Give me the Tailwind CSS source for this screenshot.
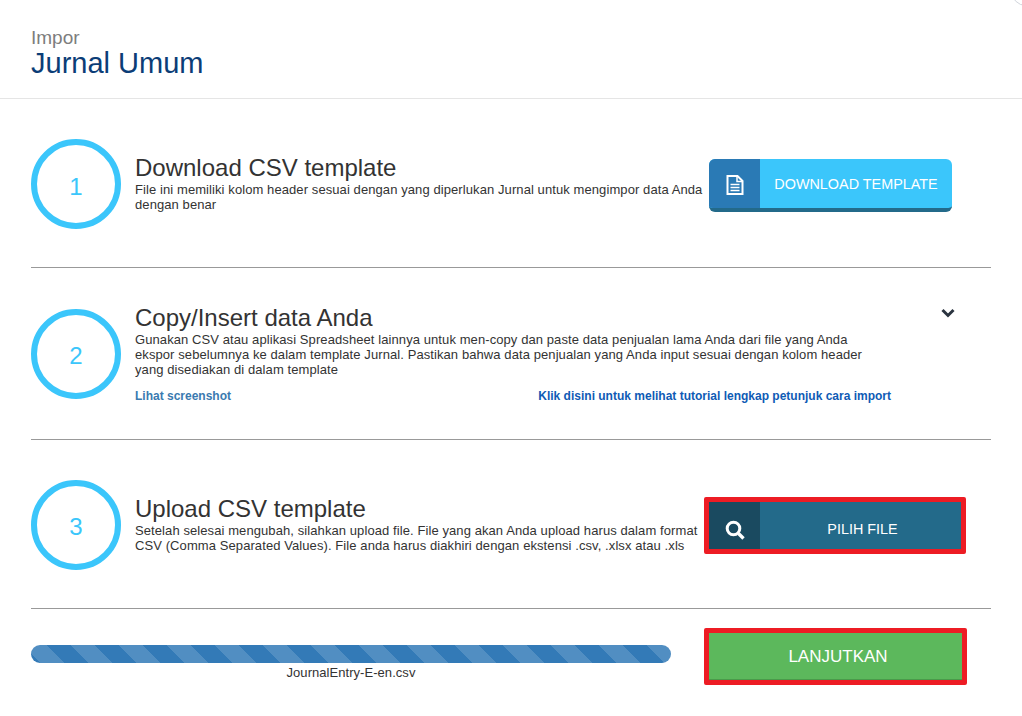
<!DOCTYPE html>
<html lang="en">
  <head>
    <meta charset="UTF-8" />
    <meta name="viewport" content="width=device-width, initial-scale=1.0" />
    <title>Impor - Jurnal Umum</title>
    <script src="https://cdn.jsdelivr.net/npm/@tailwindcss/browser@4"></script>
  </head>
  <body class="relative h-[716px] overflow-hidden bg-white font-['Liberation_Sans',Arial,sans-serif] text-[#333]">
    <!-- close button corner -->
    <div class="absolute left-[1011px] top-[-24px] h-[30px] w-[30px] rounded-full border border-gray-300"></div>

    <!-- Header -->
    <header class="h-[99px] border-b border-[#e5e5e5] px-[31px] pt-[28px]">
      <p class="text-[19px] leading-[20px] text-[#7d7d7d]">Impor</p>
      <h1 class="mt-[-1px] text-[29px] leading-[32px] text-[#0b3d77]">Jurnal Umum</h1>
    </header>

    <main class="px-[31px]">
      <!-- Step 1 -->
      <section class="flex h-[169px] border-b border-[#999] pt-[40px]">
        <div class="flex h-[90px] w-[90px] shrink-0 items-center justify-center rounded-full border-[6px] border-[#3bc6fb] pt-[5px] text-[24px] text-[#3bc6fb]">1</div>
        <div class="ml-[14px] w-[574px] pt-[16px]">
          <h2 class="text-[24px] leading-[26px]">Download CSV template</h2>
          <p class="mt-[1px] text-[13px] leading-[15px] tracking-[0.087px]">File ini memiliki kolom header sesuai dengan yang diperlukan Jurnal untuk mengimpor data Anda dengan benar</p>
        </div>
        <div class="mt-[20px] flex h-[53px] w-[243px] overflow-hidden rounded-[6px] border-b-[4px] border-[#236a8a] bg-[#3bc6fb] text-white">
          <span class="flex w-[51px] items-center justify-center bg-[#2a7ab5] pt-[3px]">
            <svg class="h-[20px] w-[18px]" viewBox="0 0 18 20" fill="none" stroke="white">
              <path d="M1.5 1h10l5 5v13h-15z" stroke-width="2" />
              <path d="M11 1v5.5h5.5" stroke-width="1.5" />
              <path d="M4.5 9.5h9M4.500 12.500h9M4.500 15.500h9" stroke-width="1.600" />
            </svg>
          </span>
          <span class="flex flex-1 items-center justify-center pt-[2px] text-[14.4px]">DOWNLOAD TEMPLATE</span>
        </div>
      </section>

      <!-- Step 2 -->
      <section class="relative flex h-[172px] border-b border-[#999] pt-[41px]">
        <div class="flex h-[90px] w-[90px] shrink-0 items-center justify-center rounded-full border-[6px] border-[#3bc6fb] pt-[4px] text-[24px] text-[#3bc6fb]">2</div>
        <div class="ml-[14px] w-[756px]">
          <h2 class="mt-[-4px] text-[24px] leading-[26px]">Copy/Insert data Anda</h2>
          <p class="mt-[1px] pr-[21px] text-[13px] leading-[15px] tracking-[0.087px]">Gunakan CSV atau aplikasi Spreadsheet lainnya untuk men-copy dan paste data penjualan lama Anda dari file yang Anda ekspor sebelumnya ke dalam template Jurnal. Pastikan bahwa data penjualan yang Anda input sesuai dengan kolom header yang disediakan di dalam template</p>
          <div class="mt-[12px] flex justify-between text-[12px] leading-[14px] font-bold">
            <span class="text-[#3a7ab0]">Lihat screenshot</span>
            <span class="text-[#0f5bb5]">Klik disini untuk melihat tutorial lengkap petunjuk cara import</span>
          </div>
        </div>
        <svg class="absolute left-[910px] top-[40px] h-[10px] w-[14px]" viewBox="0 0 14 10" fill="none" stroke="#2b3440" stroke-width="3">
          <path d="M1.500 2l5.500 5.500L12.500 2" />
        </svg>
      </section>

      <!-- Step 3 -->
      <section class="flex h-[169px] border-b border-[#999] pt-[40px]">
        <div class="flex h-[90px] w-[90px] shrink-0 items-center justify-center rounded-full border-[6px] border-[#3bc6fb] pt-[4px] text-[24px] text-[#3bc6fb]">3</div>
        <div class="ml-[14px] w-[569px] pt-[16px]">
          <h2 class="text-[24px] leading-[26px]">Upload CSV template</h2>
          <p class="mt-[1px] text-[13px] leading-[15px] tracking-[0.087px]">Setelah selesai mengubah, silahkan upload file. File yang akan Anda upload harus dalam format CSV (Comma Separated Values). File anda harus diakhiri dengan ekstensi .csv, .xlsx atau .xls</p>
        </div>
        <div class="mt-[17px] flex h-[57px] w-[262px] rounded-[2px] border-[5px] border-[#ed1c24] bg-[#236a8a] text-white">
          <span class="flex w-[51px] items-center justify-center bg-[#1a4a60] pt-[8px]">
            <svg class="h-[20px] w-[20px]" viewBox="0 0 20 20" fill="none" stroke="white">
              <circle cx="8.500" cy="8.500" r="6.300" stroke-width="3" />
              <path d="M13.500 13.500l5 5" stroke-width="3.400" />
            </svg>
          </span>
          <span class="flex flex-1 items-center justify-center pt-[8px] pl-[4px] text-[14.4px]">PILIH FILE</span>
        </div>
      </section>

      <!-- Upload progress -->
      <section class="flex pt-[19px]">
        <div class="w-[640px] pt-[17px]">
          <div class="h-[18px] rounded-full bg-[#337ab7] bg-[linear-gradient(45deg,rgba(255,255,255,0.15)_25%,transparent_25%,transparent_50%,rgba(255,255,255,0.15)_50%,rgba(255,255,255,0.15)_75%,transparent_75%,transparent)] bg-[length:48px_48px] bg-[position:-8px_0]"></div>
          <p class="mt-[2px] text-center text-[13px] leading-[16px] tracking-[0.05px]">JournalEntry-E-en.csv</p>
        </div>
        <div class="ml-[33px] h-[57px] w-[263px] rounded-[2px] border-[5px] border-[#ed1c24]">
          <div class="flex h-full items-center justify-center border-b border-[#4a9a4a] bg-[#5cb85c] pt-[2px] pl-[5px] text-[17px] text-white">LANJUTKAN</div>
        </div>
      </section>
    </main>
  </body>
</html>
